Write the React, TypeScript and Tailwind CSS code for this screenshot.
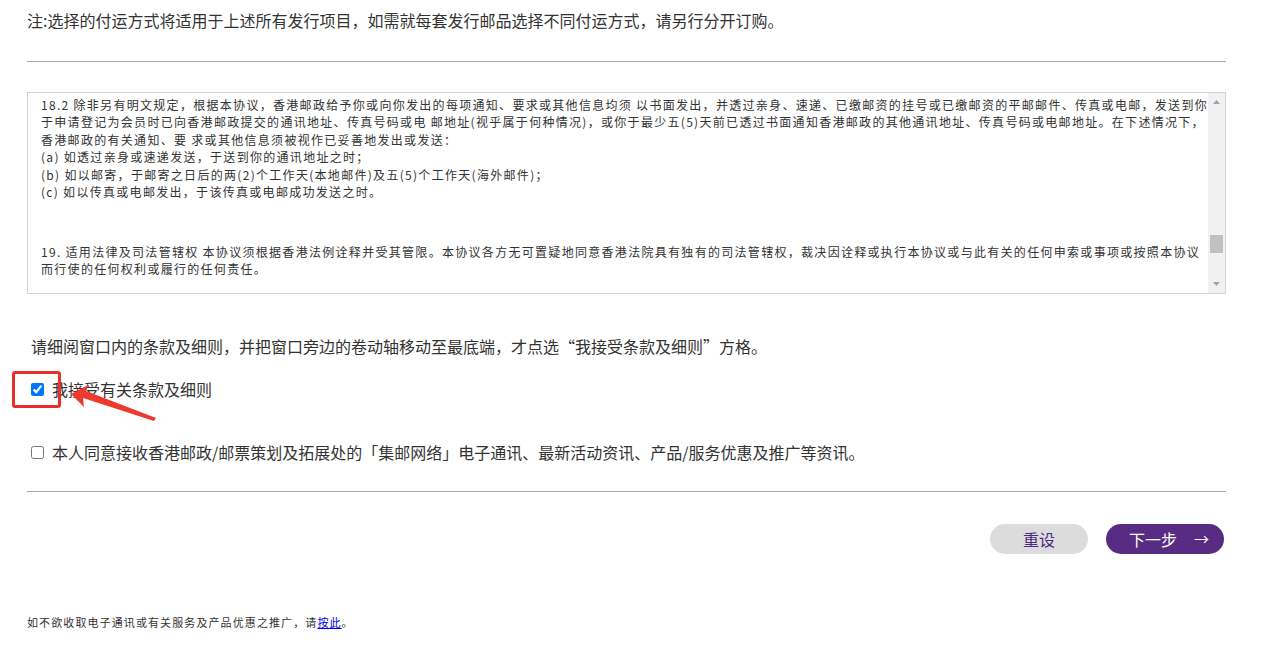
import React from 'react';

const font = { fontFamily: '"Noto Sans CJK SC", "Noto Sans", sans-serif' };

function Scrollbar() {
  return (
    <div className="w-[17px] shrink-0 bg-[#f1f1f1] flex flex-col items-center">
      <svg width="17" height="17" viewBox="0 0 17 17" className="shrink-0">
        <polygon points="5,11 12,11 8.5,7" fill="#a3a3a3" />
      </svg>
      <div className="flex-1 w-full flex flex-col">
        <div className="h-[125px]" />
        <div className="mx-[2px] h-[18px] bg-[#c1c1c1]" />
      </div>
      <svg width="17" height="17" viewBox="0 0 17 17" className="shrink-0">
        <polygon points="5,6 12,6 8.5,10" fill="#a3a3a3" />
      </svg>
    </div>
  );
}

function TermsBox() {
  const lines = [
    '18.2 除非另有明文规定，根据本协议，香港邮政给予你或向你发出的每项通知、要求或其他信息均须 以书面发出，并透过亲身、速递、已缴邮资的挂号或已缴邮资的平邮邮件、传真或电邮，发送到你',
    '于申请登记为会员时已向香港邮政提交的通讯地址、传真号码或电 邮地址(视乎属于何种情况)，或你于最少五(5)天前已透过书面通知香港邮政的其他通讯地址、传真号码或电邮地址。在下述情况下，',
    '香港邮政的有关通知、要 求或其他信息须被视作已妥善地发出或发送：',
    '(a) 如透过亲身或速递发送，于送到你的通讯地址之时；',
    '(b) 如以邮寄，于邮寄之日后的两(2)个工作天(本地邮件)及五(5)个工作天(海外邮件)；',
    '(c) 如以传真或电邮发出，于该传真或电邮成功发送之时。',
  ];
  const lines19 = [
    '19. 适用法律及司法管辖权 本协议须根据香港法例诠释并受其管限。本协议各方无可置疑地同意香港法院具有独有的司法管辖权，裁决因诠释或执行本协议或与此有关的任何申索或事项或按照本协议',
    '而行使的任何权利或履行的任何责任。',
  ];
  return (
    <div className="mt-[30px] h-[202px] border border-[#d4d4d4] flex overflow-hidden">
      <div className="flex-1 pl-[13px] pt-[3px] text-[12px] leading-[17.4px] tracking-[1.3px] text-[#333] overflow-hidden">
        {lines.map((l) => (
          <div key={l} className="whitespace-nowrap">{l}</div>
        ))}
        <div className="h-[42.6px]" />
        {lines19.map((l) => (
          <div key={l} className="whitespace-nowrap">{l}</div>
        ))}
      </div>
      <Scrollbar />
    </div>
  );
}

export default function App() {
  return (
    <div className="relative bg-white w-[1272px] h-[647px] overflow-hidden text-[#333]" style={font}>
      <div className="ml-[27px] w-[1199px]">
        <p className="pt-[8px] text-[16px] leading-[24px]">
          注:选择的付运方式将适用于上述所有发行项目，如需就每套发行邮品选择不同付运方式，请另行分开订购。
        </p>
        <div className="mt-[29px] h-px bg-[#a8a8a8]" />

        <TermsBox />

        <p className="mt-[40px] ml-[4px] text-[16px] leading-[24px]">
          请细阅窗口内的条款及细则，并把窗口旁边的卷动轴移动至最底端，才点选“我接受条款及细则”方格。
        </p>

        <label className="mt-[19px] ml-[4px] flex items-center h-[24px] text-[16px]">
          <input type="checkbox" defaultChecked className="m-0 w-[13px] h-[13px]" />
          <span className="ml-[8px]">我接受有关条款及细则</span>
        </label>

        <label className="mt-[39px] ml-[4px] flex items-center h-[24px] text-[16px]">
          <input type="checkbox" className="m-0 w-[13px] h-[13px]" />
          <span className="ml-[8px]">本人同意接收香港邮政/邮票策划及拓展处的「集邮网络」电子通讯、最新活动资讯、产品/服务优惠及推广等资讯。</span>
        </label>

        <div className="mt-[27px] h-px bg-[#a8a8a8]" />

        <div className="mt-[32px] flex justify-end gap-[18px] pr-[2px]">
          <button className="w-[98px] h-[30px] rounded-full bg-[#dcdcdc] text-[#4a2a7f] text-[16px]">
            重设
          </button>
          <button className="w-[118px] h-[30px] pl-[8px] rounded-full bg-[#582c83] text-white text-[16px] flex items-center justify-center gap-[17px]">
            <span>下一步</span>
            <span className="text-[15px]">→</span>
          </button>
        </div>

        <p className="mt-[60px] text-[11px] leading-[16px] tracking-[1.1px]">
          如不欲收取电子通讯或有关服务及产品优惠之推广，请<a href="#" className="text-[#0000ee] underline">按此</a>。
        </p>
      </div>

      {/* annotation overlay */}
      <div className="absolute left-[12px] top-[371px] w-[49px] h-[37px] border-[3px] border-[#e8302a] rounded-[3px]" />
      <svg className="absolute left-0 top-0" width="200" height="440" viewBox="0 0 200 440">
        <polygon
          points="71,394 88,385 86,391 156,418 154,421 83,398 84,407"
          fill="#ec3a2e"
        />
      </svg>
    </div>
  );
}
